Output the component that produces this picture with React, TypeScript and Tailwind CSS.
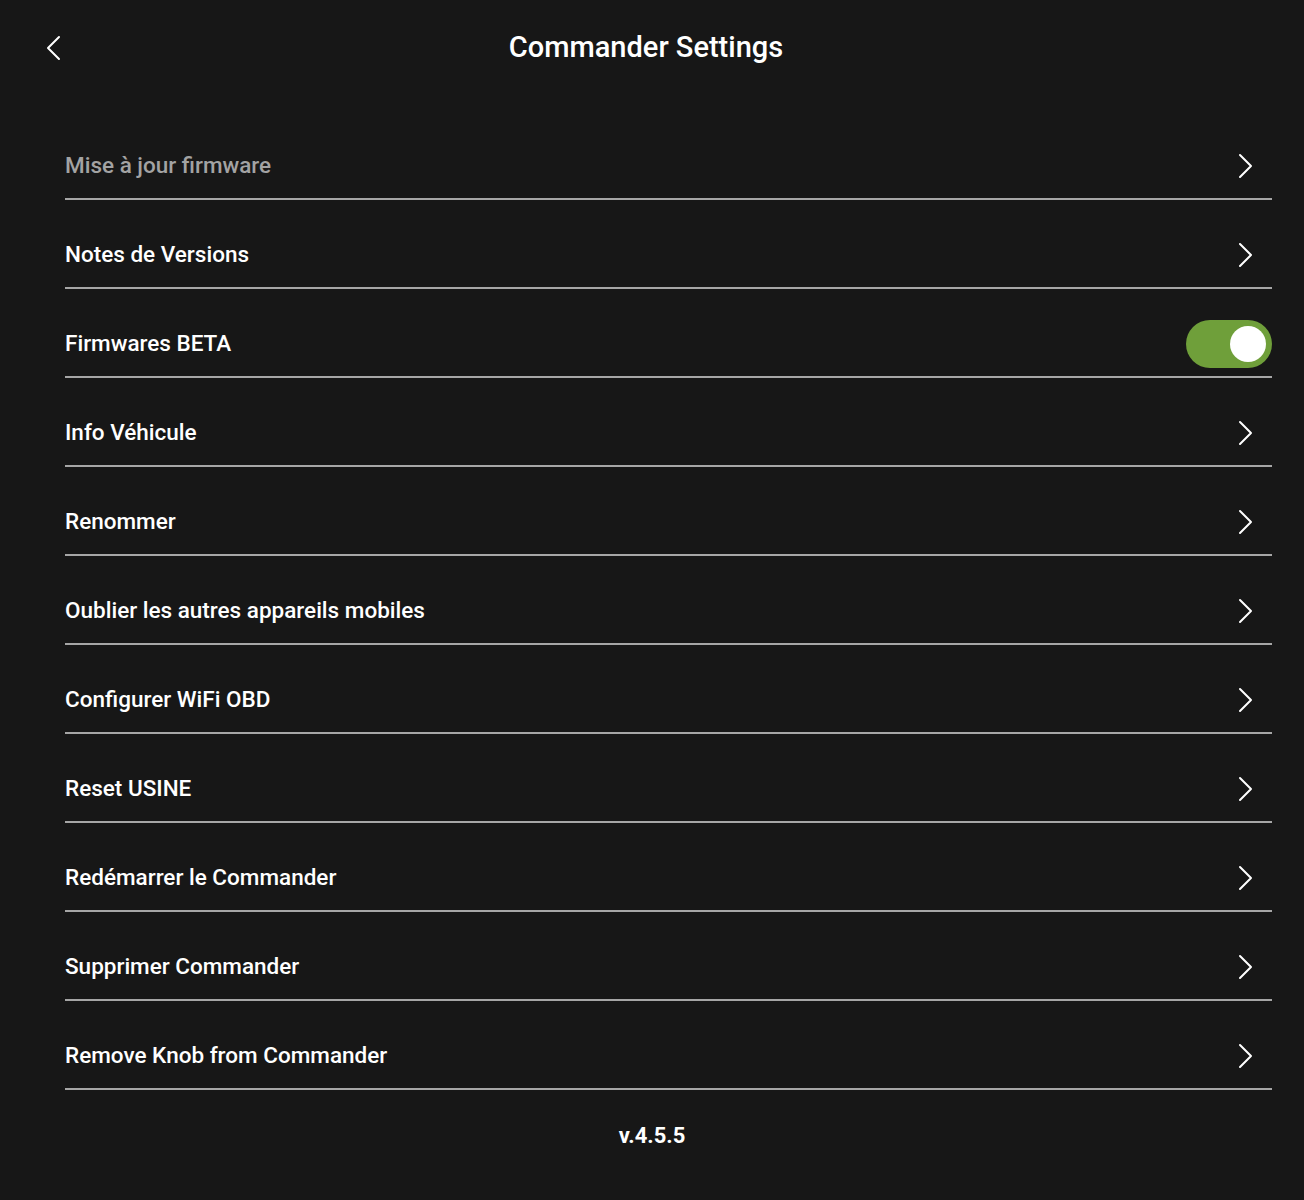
import React, { useState } from 'react';

type Item = { label: string; muted?: boolean; toggle?: boolean };

const items: Item[] = [
  { label: 'Mise à jour firmware', muted: true },
  { label: 'Notes de Versions' },
  { label: 'Firmwares BETA', toggle: true },
  { label: 'Info Véhicule' },
  { label: 'Renommer' },
  { label: 'Oublier les autres appareils mobiles' },
  { label: 'Configurer WiFi OBD' },
  { label: 'Reset USINE' },
  { label: 'Redémarrer le Commander' },
  { label: 'Supprimer Commander' },
  { label: 'Remove Knob from Commander' },
];

function Chevron({ left = false }: { left?: boolean }) {
  return (
    <svg width="16" height="26" viewBox="0 0 16 26" fill="none">
      <path
        d={left ? 'M13 2 L2 13 L13 24' : 'M3 2 L14 13 L3 24'}
        stroke="#ffffff"
        strokeWidth="2"
        strokeLinecap="round"
        strokeLinejoin="round"
      />
    </svg>
  );
}

function Toggle({ on, onChange }: { on: boolean; onChange: () => void }) {
  return (
    <button
      type="button"
      onClick={onChange}
      className={`flex h-[48px] w-[86px] items-center rounded-full px-[6px] ${on ? 'justify-end bg-[#6f9f3a]' : 'justify-start bg-[#4a4a4a]'}`}
    >
      <span className="block h-[36px] w-[36px] rounded-full bg-white" />
    </button>
  );
}

export default function App() {
  const [beta, setBeta] = useState(true);

  return (
    <div className="min-h-[1200px] w-full bg-[#171717] text-white" style={{ fontFamily: 'Roboto, "Liberation Sans", sans-serif' }}>
      <header className="relative flex h-[96px] items-center justify-center">
        <button type="button" className="absolute left-[46px] top-[35px]">
          <Chevron left />
        </button>
        <h1 className="pr-[12px] text-[29px] font-medium">Commander Settings</h1>
      </header>

      <div className="mt-[15px] pl-[65px] pr-[32px]">
        {items.map((item) => (
          <div key={item.label} className="border-b-2 border-[#a6a6a6] pt-[23px]">
            <div className="flex h-[64px] items-center justify-between">
              <span className={`text-[22.5px] font-medium ${item.muted ? 'text-[#a3a3a3]' : 'text-white'}`}>
                {item.label}
              </span>
              {item.toggle ? (
                <Toggle on={beta} onChange={() => setBeta(!beta)} />
              ) : (
                <span className="mr-[19px] flex items-center">
                  <Chevron />
                </span>
              )}
            </div>
          </div>
        ))}
      </div>

      <p className="mt-[29px] text-center text-[22px] font-bold">v.4.5.5</p>
    </div>
  );
}
